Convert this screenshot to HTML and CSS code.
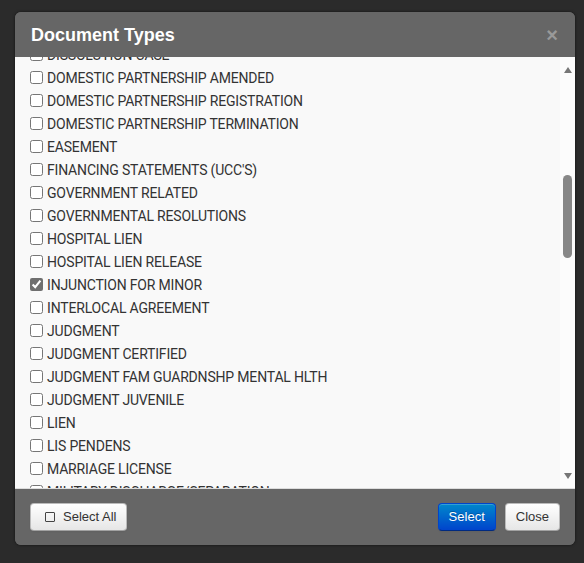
FILE: index.html
```html
<!DOCTYPE html>
<html>
<head>
<meta charset="utf-8">
<link rel="stylesheet" href="styles.css">
</head>
<body>
<div class="modal">
  <div class="modal-header">
    <h3 class="title">Document Types</h3>
    <span class="close-x">&times;</span>
  </div>
  <div class="modal-body">
    <div class="list">
      <div class="items">
        <label class="item"><input type="checkbox">DISSOLUTION CASE</label>
        <label class="item"><input type="checkbox">DOMESTIC PARTNERSHIP AMENDED</label>
        <label class="item"><input type="checkbox">DOMESTIC PARTNERSHIP REGISTRATION</label>
        <label class="item"><input type="checkbox">DOMESTIC PARTNERSHIP TERMINATION</label>
        <label class="item"><input type="checkbox">EASEMENT</label>
        <label class="item"><input type="checkbox">FINANCING STATEMENTS (UCC'S)</label>
        <label class="item"><input type="checkbox">GOVERNMENT RELATED</label>
        <label class="item"><input type="checkbox">GOVERNMENTAL RESOLUTIONS</label>
        <label class="item"><input type="checkbox">HOSPITAL LIEN</label>
        <label class="item"><input type="checkbox">HOSPITAL LIEN RELEASE</label>
        <label class="item"><input type="checkbox" checked>INJUNCTION FOR MINOR</label>
        <label class="item"><input type="checkbox">INTERLOCAL AGREEMENT</label>
        <label class="item"><input type="checkbox">JUDGMENT</label>
        <label class="item"><input type="checkbox">JUDGMENT CERTIFIED</label>
        <label class="item"><input type="checkbox">JUDGMENT FAM GUARDNSHP MENTAL HLTH</label>
        <label class="item"><input type="checkbox">JUDGMENT JUVENILE</label>
        <label class="item"><input type="checkbox">LIEN</label>
        <label class="item"><input type="checkbox">LIS PENDENS</label>
        <label class="item"><input type="checkbox">MARRIAGE LICENSE</label>
        <label class="item"><input type="checkbox">MILITARY DISCHARGE/SEPARATION</label>
      </div>
    </div>
    <div class="scrollbar">
      <span class="arrow up"></span>
      <span class="thumb"></span>
      <span class="arrow down"></span>
    </div>
  </div>
  <div class="modal-footer">
    <button class="btn btn-all"><span class="sq"></span>Select All</button>
    <div class="right">
      <button class="btn btn-primary">Select</button>
      <button class="btn">Close</button>
    </div>
  </div>
</div>
</body>
</html>
```
FILE: styles.css
```css
html, body {
  margin: 0;
  padding: 0;
  background: #2b2b2b;
}
body {
  padding: 12px 9px 0 15px;
  height: 563px;
  box-sizing: border-box;
}
.modal {
  width: 560px;
  height: 533px;
  display: flex;
  flex-direction: column;
  border-radius: 6px;
  overflow: hidden;
  box-shadow: 0 0 3px rgba(0,0,0,0.6);
  background: #666;
}
.modal-header {
  height: 45px;
  flex: none;
  background: #666;
  display: flex;
  align-items: center;
  justify-content: space-between;
  padding: 0 17px 0 16px;
}
.title {
  margin: 0;
  font-family: "Liberation Sans", Arial, sans-serif;
  font-weight: bold;
  font-size: 18px;
  color: #fff;
  line-height: 20px;
  padding-top: 1px;
}
.close-x {
  font-family: "Liberation Sans", Arial, sans-serif;
  font-weight: bold;
  font-size: 20px;
  line-height: 20px;
  color: #999;
}
.modal-body {
  flex: 1;
  display: flex;
  background: #f9f9f9;
  border-bottom: 1px solid #ddd;
  overflow: hidden;
}
.list {
  flex: 1;
  overflow: hidden;
  padding-left: 15px;
}
.items {
  margin-top: -14px;
}
.item {
  display: flex;
  align-items: center;
  height: 23px;
  font-family: Roboto, "Liberation Sans", sans-serif;
  font-size: 14px;
  letter-spacing: -0.18px;
  color: #333;
  white-space: nowrap;
}
.item input {
  width: 13px;
  height: 13px;
  margin: 0 4px 0 0;
  accent-color: #6f6f6f;
}
.scrollbar {
  width: 15px;
  flex: none;
  background: #fcfcfc;
  display: flex;
  flex-direction: column;
  align-items: center;
  padding-top: 10px;
  padding-bottom: 9px;
  box-sizing: border-box;
}
.arrow {
  width: 0;
  height: 0;
  border-left: 4.5px solid transparent;
  border-right: 4.5px solid transparent;
}
.arrow.up {
  border-bottom: 6px solid #777;
}
.arrow.down {
  border-top: 6px solid #777;
  margin-top: auto;
}
.thumb {
  width: 9px;
  height: 83px;
  border-radius: 5px;
  background: #888;
  margin-top: 102px;
}
.modal-footer {
  height: 56px;
  flex: none;
  background: #666;
  display: flex;
  justify-content: space-between;
  align-items: flex-start;
  padding: 14px 15px 0 15px;
  box-sizing: border-box;
}
.right {
  display: flex;
  gap: 9px;
}
.btn {
  height: 28px;
  padding: 0 10px 1px;
  font-family: "Liberation Sans", Arial, sans-serif;
  font-size: 13px;
  color: #333;
  background: linear-gradient(#ffffff, #e6e6e6);
  border: 1px solid #bbb;
  border-bottom-color: #a2a2a2;
  border-radius: 4px;
  box-shadow: inset 0 1px 0 rgba(255,255,255,0.2), 0 1px 2px rgba(0,0,0,0.05);
  display: inline-flex;
  align-items: center;
}
.btn-all {
  padding: 0 10px 1px 14px;
}
.btn-primary {
  color: #fff;
  background: linear-gradient(#0088cc, #0044cc);
  border-color: #0044cc #0044cc #002a80;
  text-shadow: 0 -1px 0 rgba(0,0,0,0.25);
}
.sq {
  width: 8px;
  height: 8px;
  border: 1px solid #444;
  border-radius: 1px;
  margin-right: 8px;
}
```
